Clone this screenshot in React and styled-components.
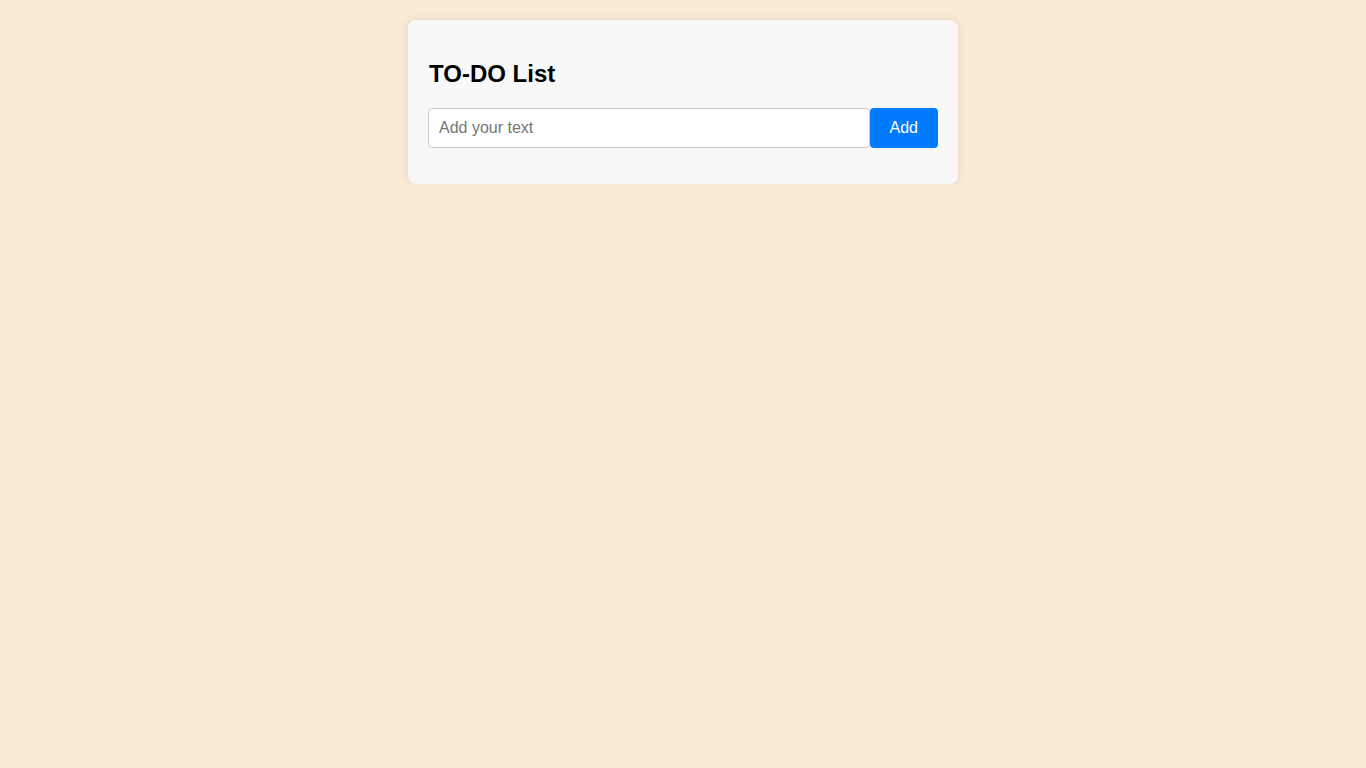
import React, { useState } from "react";
import styled, { createGlobalStyle } from "styled-components";

const GlobalStyle = createGlobalStyle`
  html, body {
    margin: 0;
    padding: 0;
    background: antiquewhite;
    font-family: "Liberation Sans", Arial, sans-serif;
  }
  * { box-sizing: border-box; }
`;

const Card = styled.div`
  width: 550px;
  margin: 20px auto 0;
  padding: 20px;
  background: #f8f8f8;
  border-radius: 8px;
  box-shadow: 0 0 10px rgba(0, 0, 0, 0.1);
`;

const Title = styled.h2`
  margin: 20px 0;
  font-size: 24px;
  line-height: 27.6px;
  font-weight: bold;
  color: #000;
  padding-left: 1px;
`;

const Form = styled.form`
  display: flex;
`;

const Input = styled.input`
  flex: 1;
  height: 40px;
  padding: 0 10px;
  font-size: 16px;
  font-family: inherit;
  border: 1px solid #ccc;
  border-radius: 4px;
  background: #fff;
  outline: none;
  &::placeholder { color: #757575; }
`;

const Button = styled.button`
  height: 40px;
  padding: 0 20px;
  font-size: 16px;
  font-family: inherit;
  color: #fff;
  background: #007bff;
  border: none;
  border-radius: 4px;
  cursor: pointer;
`;

const TaskList = styled.ul`
  list-style: none;
  margin: 16px 0 0;
  padding: 0;
`;

export default function App() {
  const [text, setText] = useState("");
  const [tasks, setTasks] = useState([]);
  const add = (e) => {
    e.preventDefault();
    if (!text.trim()) return;
    setTasks([...tasks, text.trim()]);
    setText("");
  };
  return (
    <>
      <GlobalStyle />
      <Card>
        <Title>TO-DO List</Title>
        <Form onSubmit={add}>
          <Input
            placeholder="Add your text"
            value={text}
            onChange={(e) => setText(e.target.value)}
          />
          <Button type="submit">Add</Button>
        </Form>
        <TaskList>
          {tasks.map((t, i) => (
            <li key={i}>{t}</li>
          ))}
        </TaskList>
      </Card>
    </>
  );
}
